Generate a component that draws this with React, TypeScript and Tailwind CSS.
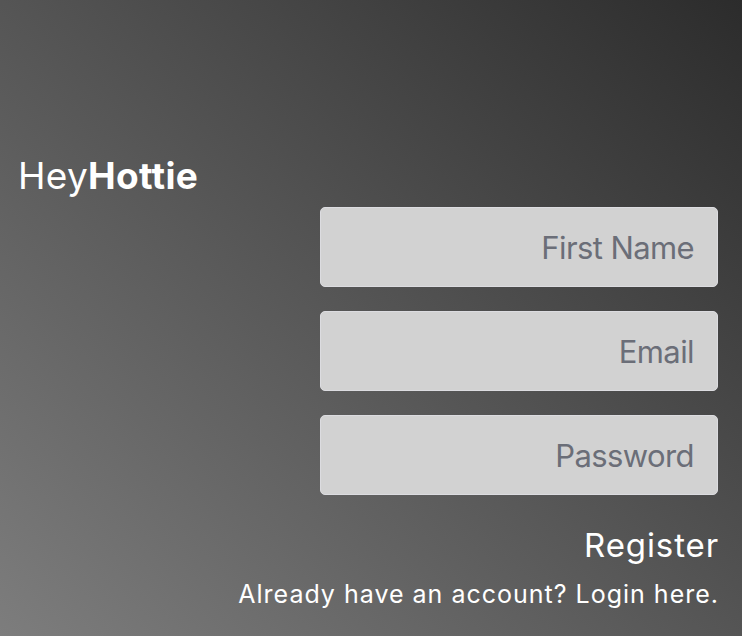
export default function App() {
  return (
    <div
      className="w-[742px] h-[636px] overflow-hidden bg-[linear-gradient(to_top_right,#7d7d7d_0%,#555555_50%,#2c2c2c_100%)] text-white flex flex-col"
      style={{ fontFamily: "Inter, 'Noto Sans', sans-serif" }}
    >
      <div className="pl-[18px] pt-[154px] text-[37px] leading-[44px] tracking-[0.3px]">
        Hey<span className="font-bold">Hottie</span>
      </div>
      <div className="flex flex-col items-end pr-[24px] mt-[9px]">
        <div className="flex flex-col gap-[24px] w-[398px]">
          {["First Name", "Email", "Password"].map((p) => (
            <input
              key={p}
              type="text"
              placeholder={p}
              className="h-[80px] w-full rounded-[5px] bg-[#d2d2d2] border border-[#dcdce0] text-right pr-[23px] text-[31px] tracking-[-0.6px] text-[#6b6e78] placeholder:text-[#6b6e78] outline-none"
            />
          ))}
        </div>
        <div className="mt-[30px] mr-[-1px] text-[33px] leading-[40px] tracking-[0.9px]">Register</div>
        <div className="mt-[14px] mr-[-1px] text-[25px] leading-[30px] tracking-[1px]">
          Already have an account? Login here.
        </div>
      </div>
    </div>
  );
}
